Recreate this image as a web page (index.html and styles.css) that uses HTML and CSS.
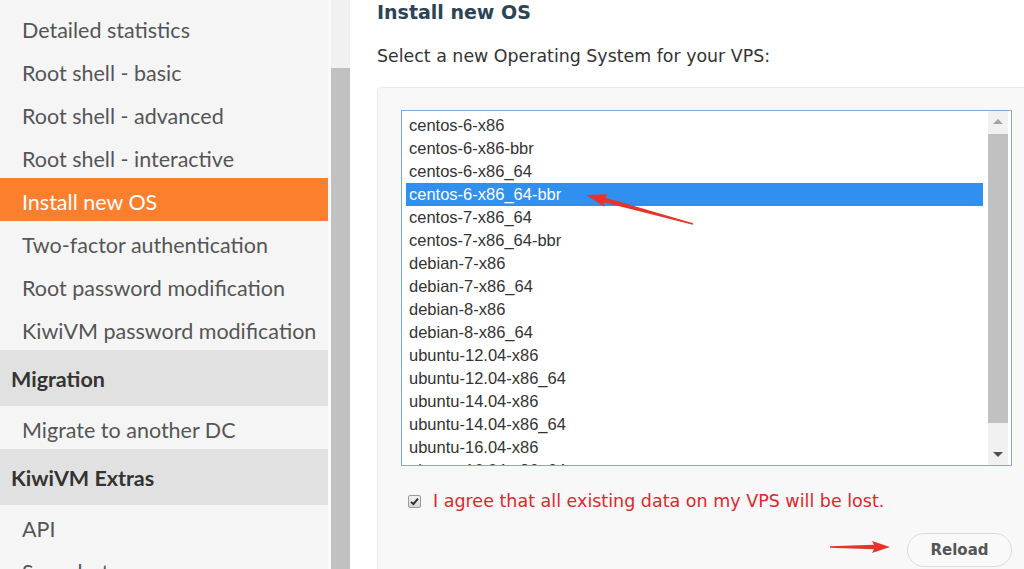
FILE: index.html
```html
<!DOCTYPE html>
<html lang="en">
<head>
<meta charset="utf-8">
<title>Install new OS</title>
<link rel="stylesheet" href="styles.css">
</head>
<body>
<div class="page">
  <aside class="sidebar">
    <nav class="menu">
      <a class="item">Detailed statistics</a>
      <a class="item">Root shell - basic</a>
      <a class="item">Root shell - advanced</a>
      <a class="item">Root shell - interactive</a>
      <a class="item active">Install new OS</a>
      <a class="item">Two-factor authentication</a>
      <a class="item">Root password modification</a>
      <a class="item">KiwiVM password modification</a>
      <div class="group">Migration</div>
      <a class="item">Migrate to another DC</a>
      <div class="group">KiwiVM Extras</div>
      <a class="item">API</a>
      <a class="item">Snapshots</a>
    </nav>
    <div class="sb-gap"></div>
    <div class="sb-scroll"><div class="sb-thumb"></div></div>
  </aside>
  <main class="content">
    <h2 class="title">Install new OS</h2>
    <p class="lead">Select a new Operating System for your VPS:</p>
    <section class="panel">
      <div class="listbox">
        <ul class="options">
          <li>centos-6-x86</li>
          <li>centos-6-x86-bbr</li>
          <li>centos-6-x86_64</li>
          <li class="sel">centos-6-x86_64-bbr</li>
          <li>centos-7-x86_64</li>
          <li>centos-7-x86_64-bbr</li>
          <li>debian-7-x86</li>
          <li>debian-7-x86_64</li>
          <li>debian-8-x86</li>
          <li>debian-8-x86_64</li>
          <li>ubuntu-12.04-x86</li>
          <li>ubuntu-12.04-x86_64</li>
          <li>ubuntu-14.04-x86</li>
          <li>ubuntu-14.04-x86_64</li>
          <li>ubuntu-16.04-x86</li>
          <li>ubuntu-16.04-x86_64</li>
        </ul>
        <div class="lb-scroll">
          <div class="lb-btn"><span class="tri-up"></span></div>
          <div class="lb-thumb"></div>
          <div class="lb-track"></div>
          <div class="lb-btn"><span class="tri-down"></span></div>
        </div>
      </div>
      <label class="agree">
        <span class="check"><svg width="9" height="9" viewBox="0 0 9 9"><path d="M1 4.8 L3.4 7.2 L8 1.6" fill="none" stroke="#2a2a2a" stroke-width="1.9"/></svg></span>
        I agree that all existing data on my VPS will be lost.
      </label>
      <div class="actions"><button class="reload">Reload</button></div>
    </section>
  </main>
  <svg class="annot" width="1024" height="569" viewBox="0 0 1024 569">
    <polygon fill="#e8332b" transform="translate(693 224) rotate(195.2)" points="0,-0.7 92,-2.4 90,-6.5 111,0 90,6.5 92,2.4 0,0.7"/>
    <polygon fill="#e8332b" transform="translate(830 547)" points="0,-0.7 44,-2.2 42,-6 60,0 42,6 44,2.2 0,0.7"/>
  </svg>
</div>
</body>
</html>
```

FILE: styles.css
```css
html, body {
  margin: 0;
  padding: 0;
  height: 100%;
  overflow: hidden;
  background: #ffffff;
}

.page {
  position: relative;
  display: flex;
  height: 569px;
  overflow: hidden;
}

/* ---------- sidebar ---------- */
.sidebar {
  flex: none;
  display: flex;
  width: 350px;
  height: 569px;
}

.menu {
  width: 328px;
  padding-top: 6px;
  background: #f5f5f5;
  overflow: hidden;
  font-family: Lato, "Noto Sans", sans-serif;
  font-size: 21.5px;
}

.item {
  display: block;
  height: 43px;
  line-height: 48px;
  padding-left: 22px;
  color: #555555;
  white-space: nowrap;
  overflow: hidden;
}

.item.active {
  background: #fc7f2e;
  color: #ffffff;
}

.group {
  height: 56px;
  line-height: 58px;
  padding-left: 11px;
  background: #e1e1e1;
  color: #333333;
  font-weight: bold;
}

.sb-gap {
  width: 3px;
  background: #fafafa;
}

.sb-scroll {
  width: 19px;
  display: flex;
  flex-direction: column;
  background: #f1f1f1;
}

.sb-thumb {
  margin-top: 68px;
  flex: 1;
  background: #c1c1c1;
}

/* ---------- content ---------- */
.content {
  flex: 1;
  min-width: 0;
  padding-left: 27px;
  overflow: hidden;
}

.title {
  margin: 0;
  height: 24px;
  line-height: 24px;
  font-family: "DejaVu Sans", Verdana, sans-serif;
  font-size: 19px;
  font-weight: bold;
  color: #2b4456;
}

.lead {
  margin: 22px 0 0;
  height: 20px;
  line-height: 20px;
  font-family: "DejaVu Sans", Verdana, sans-serif;
  font-size: 17.4px;
  color: #333333;
}

.panel {
  margin-top: 21px;
  width: 700px;
  height: 520px;
  padding: 22px 0 0 23px;
  background: #f8f8f8;
  border: 1px solid #ebebeb;
  border-radius: 4px;
}

.listbox {
  box-sizing: border-box;
  width: 611px;
  height: 356px;
  display: flex;
  border: 1px solid #7ea8da;
  background: #ffffff;
  overflow: hidden;
}

.options {
  list-style: none;
  margin: 3px 0 0 4px;
  padding: 0;
  width: 577px;
  flex: none;
  font-family: "Liberation Sans", Arial, sans-serif;
  font-size: 16.5px;
  color: #333333;
}

.options li {
  height: 23px;
  line-height: 23px;
  padding-left: 3px;
}

.options li.sel {
  background: #3090f0;
  color: #ffffff;
}

.lb-scroll {
  width: 20px;
  margin-left: 5px;
  display: flex;
  flex-direction: column;
  background: #f1f1f1;
}

.lb-btn {
  height: 21px;
  display: flex;
  align-items: center;
  justify-content: center;
}

.tri-up {
  width: 0;
  height: 0;
  border-left: 5px solid transparent;
  border-right: 5px solid transparent;
  border-bottom: 5px solid #a3a3a3;
}

.tri-down {
  width: 0;
  height: 0;
  border-left: 5px solid transparent;
  border-right: 5px solid transparent;
  border-top: 5px solid #505050;
}

.lb-thumb {
  margin-top: 2px;
  height: 289px;
  background: #c1c1c1;
}

.lb-track {
  flex: 1;
}

.agree {
  margin-top: 24px;
  height: 22px;
  display: flex;
  align-items: center;
  padding-left: 7px;
  font-family: "DejaVu Sans", Verdana, sans-serif;
  font-size: 17.5px;
  color: #e0262b;
}

.check {
  box-sizing: border-box;
  width: 13px;
  height: 13px;
  margin-right: 12px;
  display: flex;
  align-items: center;
  justify-content: center;
  border: 1px solid #9a9a9a;
  border-radius: 2px;
  background: linear-gradient(#f2f2f2, #d6d6d6);
}

.actions {
  width: 611px;
  margin-top: 21px;
  display: flex;
  justify-content: flex-end;
}

.reload {
  box-sizing: border-box;
  width: 105px;
  height: 34px;
  border: 1px solid #dcdcdc;
  border-radius: 17px;
  background: #f9f9f9;
  font-family: "DejaVu Sans", Verdana, sans-serif;
  font-size: 15px;
  font-weight: bold;
  color: #555555;
  padding: 0;
}

/* annotation overlay */
.annot {
  position: absolute;
  left: 0;
  top: 0;
  pointer-events: none;
}
```
